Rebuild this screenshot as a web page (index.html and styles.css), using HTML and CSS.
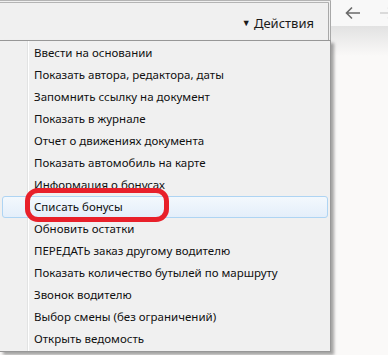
FILE: index.html
```html
<!DOCTYPE html>
<html lang="ru">
<head>
    <meta charset="UTF-8">
    <title>Действия</title>
    <link rel="stylesheet" href="styles.css">
</head>
<body>

<div class="screen">
    <div class="form-side">
        <div class="toolbar">
            <span class="actions-btn"><span class="caret">&#9660;</span> Действия</span>
        </div>

        <div class="popup-menu">
            <div class="menu-item">Ввести на основании</div>
            <div class="menu-item">Показать автора, редактора, даты</div>
            <div class="menu-item">Запомнить ссылку на документ</div>
            <div class="menu-item">Показать в журнале</div>
            <div class="menu-item">Отчет о движениях документа</div>
            <div class="menu-item">Показать автомобиль на карте</div>
            <div class="menu-item">Информация о бонусах</div>
            <div class="menu-item active">Списать бонусы</div>
            <div class="menu-item">Обновить остатки</div>
            <div class="menu-item">ПЕРЕДАТЬ заказ другому водителю</div>
            <div class="menu-item">Показать количество бутылей по маршруту</div>
            <div class="menu-item">Звонок водителю</div>
            <div class="menu-item">Выбор смены (без ограничений)</div>
            <div class="menu-item">Открыть ведомость</div>

            <div class="red-mark"></div>
        </div>
    </div>

    <div class="browser-side">
        <div class="nav-bar">
            <svg class="nav-arrow" width="16" height="14" viewBox="0 0 16 14">
                <path d="M15 7H2M7 1.5L1.5 7L7 12.5" fill="none" stroke="#6a6a6a" stroke-width="1.6"/>
            </svg>
            <svg class="nav-arrow fwd" width="16" height="14" viewBox="0 0 16 14">
                <path d="M1 7H14M9 1.5L14.5 7L9 12.5" fill="none" stroke="#cfcfcf" stroke-width="1.6"/>
            </svg>
        </div>
        <div class="nav-fade"></div>
    </div>
</div>

</body>
</html>
```

FILE: styles.css
```css
body {
    margin: 0;
    font-family: "Noto Sans", "Open Sans", Arial, sans-serif;
    font-size: 11.5px;
    color: #111;
    background: #faf9f8;
}
.screen {
    display: flex;
    width: 388px;
    height: 355px;
    overflow: hidden;
}
.form-side {
    width: 331px;
    flex-shrink: 0;
    position: relative;
}
.toolbar {
    height: 37px;
    background: #f0f0f0;
    border-top: 3px double #b4b4b4;
    border-right: 3px double #a8a8a8;
    display: flex;
    justify-content: flex-end;
    align-items: center;
    padding-right: 14px;
}
.actions-btn {
    font-size: 13px;
    color: #1a1a1a;
    margin-top: 2px;
}
.caret {
    font-size: 9px;
    position: relative;
    top: -2px;
}
.popup-menu {
    position: relative;
    background: #f0f0f0;
    border: 1px solid #979797;
    border-left: none;
    padding: 1px 2px 1px 0;
    box-shadow: 3px 3px 3px rgba(0, 0, 0, 0.35);
    background-image: linear-gradient(to right, transparent 27px, #e2e3e3 27px, #e2e3e3 28px, #fff 28px, #fff 29px, transparent 29px);
}
.menu-item {
    height: 22px;
    line-height: 20px;
    white-space: nowrap;
    border: 1px solid transparent;
    margin-left: 2px;
    padding-left: 31px;
    box-sizing: border-box;
}
.menu-item.active {
    background: linear-gradient(#f3f8fd, #e4eefa);
    border-color: #aed4f3;
    border-radius: 3px;
}
.red-mark {
    position: absolute;
    left: 25px;
    top: 147px;
    width: 134px;
    height: 24px;
    border: 5.5px solid #e8202a;
    border-radius: 13px;
}
.browser-side {
    flex: 1;
    display: flex;
    flex-direction: column;
}
.nav-bar {
    height: 26px;
    background: #f8f8f8;
    display: flex;
    align-items: center;
    padding-left: 14px;
    gap: 18px;
}
.nav-fade {
    height: 30px;
    background: linear-gradient(#e2e2e2, #faf9f8);
}
```
